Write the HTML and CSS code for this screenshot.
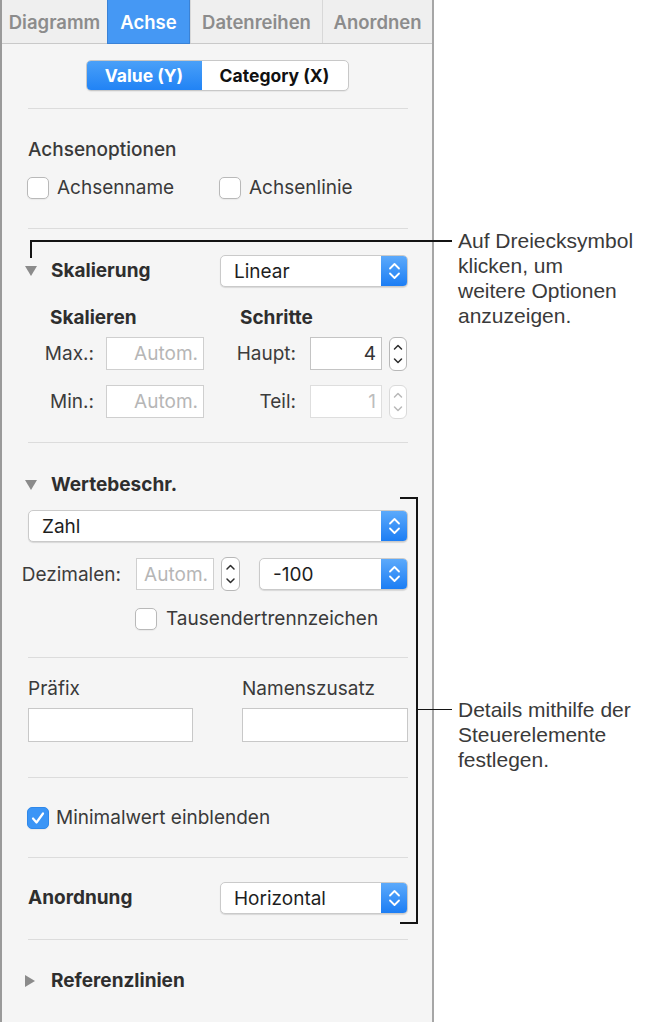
FILE: index.html
```html
<!DOCTYPE html>
<html lang="de">
<head>
<meta charset="utf-8">
<title>Achse</title>
<link rel="stylesheet" href="styles.css">
</head>
<body>
<div class="page">
  <aside class="panel">
    <nav class="tabs">
      <div class="tab">Diagramm</div>
      <div class="tab active">Achse</div>
      <div class="tab">Datenreihen</div>
      <div class="tab">Anordnen</div>
    </nav>
    <div class="seg-wrap">
      <div class="seg"><span class="seg-btn on">Value (Y)</span><span class="seg-btn">Category (X)</span></div>
    </div>
    <div class="body">
      <section class="sec s-opts">
        <div class="opt-title">Achsenoptionen</div>
        <div class="check-row">
          <div class="check"><span class="box"></span><span>Achsenname</span></div>
          <div class="check"><span class="box"></span><span>Achsenlinie</span></div>
        </div>
      </section>

      <section class="sec s-scale">
        <div class="disc-row">
          <div class="disc-title">
            <svg class="tri" width="12" height="10" viewBox="0 0 12 10"><polygon points="0,0 12,0 6,10"/></svg>
            <span class="bold">Skalierung</span>
          </div>
          <div class="popup w188">
            <span class="popup-text">Linear</span>
            <span class="popup-arrow"><svg width="27" height="32" viewBox="0 0 27 32"><path d="M9 13.5 L13.5 9 L18 13.5 M9 18.5 L13.5 23 L18 18.5"/></svg></span>
          </div>
        </div>
        <div class="heads">
          <span class="bold">Skalieren</span>
          <span class="bold">Schritte</span>
        </div>
        <div class="num-grid">
          <span class="lbl">Max.:</span>
          <span class="field ph">Autom.</span>
          <span class="lbl lbl2">Haupt:</span>
          <span class="field">4</span>
          <span class="stepper"><svg width="18" height="34" viewBox="0 0 18 34"><path d="M5.5 12 L9 8.5 L12.5 12 M5.5 22 L9 25.5 L12.5 22"/></svg></span>

          <span class="lbl">Min.:</span>
          <span class="field ph">Autom.</span>
          <span class="lbl lbl2">Teil:</span>
          <span class="field dis">1</span>
          <span class="stepper dis"><svg width="18" height="34" viewBox="0 0 18 34"><path d="M5.5 12 L9 8.5 L12.5 12 M5.5 22 L9 25.5 L12.5 22"/></svg></span>
        </div>
      </section>

      <section class="sec s-labels">
        <div class="disc-title">
          <svg class="tri" width="12" height="10" viewBox="0 0 12 10"><polygon points="0,0 12,0 6,10"/></svg>
          <span class="bold">Wertebeschr.</span>
        </div>
        <div class="popup full">
          <span class="popup-text">Zahl</span>
          <span class="popup-arrow"><svg width="27" height="32" viewBox="0 0 27 32"><path d="M9 13.5 L13.5 9 L18 13.5 M9 18.5 L13.5 23 L18 18.5"/></svg></span>
        </div>
        <div class="dec-row">
          <span class="dec-lbl">Dezimalen:</span>
          <span class="field ph dec-field">Autom.</span>
          <span class="stepper dec-step"><svg width="19" height="34" viewBox="0 0 19 34"><path d="M6 12 L9.5 8.5 L13 12 M6 22 L9.5 25.5 L13 22"/></svg></span>
          <div class="popup grow">
            <span class="popup-text">-100</span>
            <span class="popup-arrow"><svg width="27" height="32" viewBox="0 0 27 32"><path d="M9 13.5 L13.5 9 L18 13.5 M9 18.5 L13.5 23 L18 18.5"/></svg></span>
          </div>
        </div>
        <div class="check thousand"><span class="box"></span><span>Tausendertrennzeichen</span></div>
      </section>

      <section class="sec s-prefix">
        <div class="prefix-grid">
          <span class="plbl">Präfix</span>
          <span class="plbl">Namenszusatz</span>
          <span class="field wide"></span>
          <span class="field wide"></span>
        </div>
      </section>

      <section class="sec s-min">
        <div class="check minval"><span class="box on"><svg width="22" height="22" viewBox="0 0 22 22"><path d="M6 11.5 L9.5 15.5 L16 6.5"/></svg></span><span>Minimalwert einblenden</span></div>
      </section>

      <section class="sec s-order">
        <div class="disc-row">
          <span class="bold">Anordnung</span>
          <div class="popup w188">
            <span class="popup-text">Horizontal</span>
            <span class="popup-arrow"><svg width="27" height="32" viewBox="0 0 27 32"><path d="M9 13.5 L13.5 9 L18 13.5 M9 18.5 L13.5 23 L18 18.5"/></svg></span>
          </div>
        </div>
      </section>

      <section class="sec s-ref">
        <div class="disc-title">
          <svg class="tri right" width="10" height="12" viewBox="0 0 10 12"><polygon points="0,0 10,6 0,12"/></svg>
          <span class="bold">Referenzlinien</span>
        </div>
      </section>
    </div>
  </aside>
</div>

<div class="callouts">
  <span class="ln c1-v"></span>
  <span class="ln c1-h"></span>
  <span class="ln c2-v"></span>
  <span class="ln c2-t"></span>
  <span class="ln c2-b"></span>
  <span class="ln c2-m"></span>
  <p class="note n1">Auf Dreiecksymbol<br>klicken, um<br>weitere Optionen<br>anzuzeigen.</p>
  <p class="note n2">Details mithilfe der<br>Steuerelemente<br>festlegen.</p>
</div>
</body>
</html>
```
FILE: styles.css
```css
* { box-sizing: border-box; }
html, body { margin: 0; padding: 0; }
body {
  background: #ffffff;
  font-family: Inter, "Noto Sans", "DejaVu Sans", sans-serif;
  color: #333;
  width: 646px;
  height: 1022px;
  overflow: hidden;
  position: relative;
}
.page { display: flex; }

.panel {
  width: 434px;
  height: 1022px;
  background: #f5f5f5;
  border-left: 2px solid #9a9a9a;
  border-right: 2px solid #a6a6a6;
}

/* tabs */
.tabs {
  display: grid;
  grid-template-columns: 105px 83px 132px 1fr;
  height: 44px;
  background: #efefef;
  border-bottom: 1px solid #c9c9c9;
}
.tab {
  display: flex;
  align-items: center;
  justify-content: center;
  font-size: 18.5px;
  font-weight: 600;
  color: #8c8c8c;
  border-left: 1px solid #d8d8d8;
}
.tab:first-child { border-left: none; }
.tab.active {
  background: #4598f4;
  color: #fff;
  border: 1px solid #3a82d6;
  border-top: none;
  margin-bottom: -1px;
}

/* segmented */
.seg-wrap {
  display: flex;
  justify-content: center;
  padding: 16px 0 17px;
}
.seg {
  display: flex;
  height: 31px;
  border: 1px solid #c8c8c8;
  border-radius: 5px;
  background: #fff;
  overflow: hidden;
  box-shadow: 0 1px 1px rgba(0,0,0,0.06);
}
.seg-btn {
  display: flex;
  align-items: center;
  justify-content: center;
  font-size: 17.5px;
  font-weight: 700;
  color: #111;
}
.seg-btn:first-child { width: 115px; }
.seg-btn:last-child { width: 146px; }
.seg-btn.on {
  background: linear-gradient(#4aa0f8, #2183f5);
  color: #fff;
}

/* body */
.body { padding: 0 24px 0 26px; }
.sec { border-top: 1px solid #dcdcdc; }

.bold { font-weight: 700; font-size: 19px; color: #2e2e2e; line-height: 20px; }

.s-opts { padding: 30px 0 29px; }
.opt-title { font-size: 19px; font-weight: 500; line-height: 22px; color: #3a3a3a; }
.check-row {
  margin-top: 16px;
  display: grid;
  grid-template-columns: 192px auto;
}
.check {
  display: flex;
  align-items: center;
  gap: 8px;
  font-size: 19px;
  color: #3a3a3a;
  line-height: 22px;
  margin-left: -1px;
}
.box {
  width: 22px;
  height: 22px;
  flex: none;
  background: #fff;
  border: 1px solid #b9b9b9;
  border-radius: 5px;
  box-shadow: 0 1px 1px rgba(0,0,0,0.05);
}
.box.on {
  background: #3b95f6;
  border-color: #2f88ea;
}
.box.on svg { display: block; margin: -1px; }
.box.on path { fill: none; stroke: #fff; stroke-width: 2.2; stroke-linecap: round; stroke-linejoin: round; }

/* disclosure */
.disc-row {
  display: flex;
  align-items: center;
  justify-content: space-between;
  height: 32px;
}
.disc-title {
  display: flex;
  align-items: center;
  gap: 14px;
  margin-left: -3px;
  height: 20px;
}
.tri { fill: #8b8b8b; flex: none; }
.tri.right { margin-right: 2px; }

/* popup */
.popup {
  display: flex;
  align-items: stretch;
  height: 32px;
  background: #fff;
  border: 1px solid #cacaca;
  border-radius: 5px;
  box-shadow: 0 1px 1px rgba(0,0,0,0.12);
  overflow: hidden;
}
.popup.w188 { width: 188px; }
.popup.full { width: 100%; margin-top: 15px; }
.popup.grow { flex: 1; }
.popup-text {
  flex: 1;
  display: flex;
  align-items: center;
  padding-left: 13px;
  font-size: 19px;
  color: #1e1e1e;
}
.popup-arrow {
  width: 27px;
  flex: none;
  margin: -1px -1px -1px 0;
  background: linear-gradient(#5eabfb, #1a7cf4);
  display: flex;
  align-items: center;
  justify-content: center;
}
.popup-arrow svg { display: block; }
.popup-arrow path { fill: none; stroke: #fff; stroke-width: 1.8; stroke-linecap: round; stroke-linejoin: round; }

/* scaling */
.s-scale { padding: 26px 0 24px; }
.heads {
  margin-top: 21px;
  display: grid;
  grid-template-columns: 212px auto;
}
.heads span:first-child { padding-left: 22px; }
.num-grid {
  margin-top: 9px;
  display: grid;
  grid-template-columns: 78px 98px 106px 72px 25px;
  grid-auto-rows: 33px;
  row-gap: 15px;
  align-items: center;
}
.lbl {
  text-align: right;
  padding-right: 12px;
  font-size: 19px;
  color: #3c3c3c;
}
.lbl2 { padding-right: 14px; }
.field {
  height: 33px;
  background: #fff;
  border: 1px solid #c4c4c4;
  font-size: 19px;
  color: #333;
  display: flex;
  align-items: center;
  justify-content: flex-end;
  padding-right: 5px;
}
.field.ph { color: #b6b6b6; border-color: #cfcfcf; }
.field.dis { color: #bdbdbd; border-color: #dedede; }
.stepper {
  margin-left: 7px;
  width: 18px;
  height: 34px;
  background: #fff;
  border: 1px solid #b8b8b8;
  border-radius: 6px;
  display: flex;
  align-items: center;
  justify-content: center;
  overflow: hidden;
}
.stepper svg { display: block; flex: none; }
.stepper path { fill: none; stroke: #2c2c2c; stroke-width: 1.5; stroke-linecap: round; stroke-linejoin: round; }
.stepper.dis { border-color: #dadada; }
.stepper.dis path { stroke: #b8b8b8; }

/* labels section */
.s-labels { padding: 32px 0 27px; }
.dec-row {
  margin-top: 15px;
  display: flex;
  align-items: center;
  height: 34px;
}
.dec-lbl {
  margin-left: -8px;
  width: 101px;
  text-align: right;
  font-size: 19px;
  color: #3c3c3c;
  flex: none;
  white-space: nowrap;
}
.dec-field { width: 78px; margin-left: 15px; height: 32px; flex: none; }
.dec-step { width: 19px; margin-left: 7px; flex: none; }
.dec-row .popup { margin-left: 19px; }
.thousand { margin-top: 17px; margin-left: 107px; gap: 9px; }

/* prefix */
.s-prefix { padding: 21px 0 35px; }
.prefix-grid {
  display: grid;
  grid-template-columns: 165px 166px;
  justify-content: space-between;
  row-gap: 9px;
}
.plbl { font-size: 19px; color: #3a3a3a; line-height: 20px; }
.field.wide { height: 34px; border-color: #c8c8c8; }

/* min */
.s-min { padding: 29px 0 28px; }
.minval { gap: 7px; }

/* order */
.s-order { padding: 24px 0 25px; }

/* ref */
.s-ref { padding: 31px 0 0; }

/* callouts */
.callouts { position: absolute; inset: 0; pointer-events: none; }
.ln { position: absolute; background: #141414; display: block; }
.c1-v { left: 30px; top: 240px; width: 1.5px; height: 18px; }
.c1-h { left: 30px; top: 240px; width: 422px; height: 1.5px; }
.c2-v { left: 416px; top: 496.5px; width: 2px; height: 427px; }
.c2-t { left: 400px; top: 496.5px; width: 18px; height: 2px; }
.c2-b { left: 400px; top: 921.5px; width: 18px; height: 2px; }
.c2-m { left: 417px; top: 708.5px; width: 35px; height: 1.5px; }
.note {
  position: absolute;
  margin: 0;
  left: 458px;
  font-family: "Liberation Sans", Arial, sans-serif;
  font-size: 21px;
  line-height: 25px;
  color: #3a3a3a;
}
.n1 { top: 228px; }
.n2 { top: 697px; }
```
